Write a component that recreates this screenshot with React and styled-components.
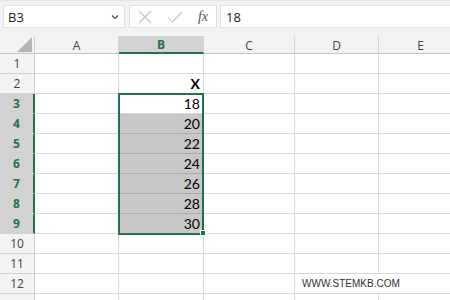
import React from "react";
import styled, { createGlobalStyle } from "styled-components";

const GlobalStyle = createGlobalStyle`
  html, body {
    margin: 0;
    padding: 0;
    background: #ffffff;
    overflow: hidden;
  }
`;

const GREEN = "#217346";
const COLS = ["A", "B", "C", "D", "E"];
const WIDTHS = [84, 85, 91, 84, 84];
const VALUES = { 2: "X", 3: 18, 4: 20, 5: 22, 6: 24, 7: 26, 8: 28, 9: 30 };

const Page = styled.div`
  width: 450px;
  height: 300px;
  overflow: hidden;
  position: relative;
  font-family: "Open Sans", "Noto Sans", sans-serif;
`;

const FormulaBar = styled.div`
  display: flex;
  align-items: flex-start;
  height: 36px;
  box-sizing: border-box;
  padding: 4px 0 0 3px;
  background: #f3f3f3;
  border-top: 1px solid #e3e3e3;
`;

const NameBox = styled.div`
  display: flex;
  align-items: center;
  justify-content: space-between;
  width: 122px;
  height: 23px;
  box-sizing: border-box;
  padding: 0 5px 0 4px;
  background: #fff;
  border: 1px solid #e2e2e2;
  font-size: 13px;
  color: #222;
`;

const ButtonBox = styled.div`
  display: flex;
  align-items: center;
  justify-content: space-between;
  width: 88px;
  height: 23px;
  margin-left: 4px;
  box-sizing: border-box;
  padding: 0 8px 0 8px;
  background: #fff;
  border: 1px solid #e2e2e2;
`;

const Fx = styled.span`
  font-family: "Liberation Serif", serif;
  font-style: italic;
  font-size: 14px;
  color: #555;
`;

const FormulaInput = styled.div`
  flex: 1;
  height: 23px;
  margin-left: 3px;
  box-sizing: border-box;
  padding: 0 5px;
  display: flex;
  align-items: center;
  background: #fff;
  border: 1px solid #e2e2e2;
  border-right: none;
  font-size: 13px;
  color: #222;
`;

const Sheet = styled.div`
  position: relative;
  display: grid;
  grid-template-columns: 35px ${WIDTHS.map((w) => w + "px").join(" ")};
  grid-auto-rows: 20px;
  grid-template-rows: 18px;
`;

const Corner = styled.div`
  background: #f3f3f3;
  border-right: 1px solid #cfcfcf;
  border-bottom: 1px solid #c4c4c4;
  box-sizing: border-box;
  display: flex;
  align-items: flex-end;
  justify-content: flex-end;
  padding: 0 2px 1px 0;
`;

const ColHead = styled.div`
  box-sizing: border-box;
  display: flex;
  align-items: center;
  justify-content: center;
  font-size: 12px;
  background: ${(p) => (p.$active ? "#d2d2d2" : "#f3f3f3")};
  color: ${(p) => (p.$active ? GREEN : "#444")};
  font-weight: ${(p) => (p.$active ? 700 : 400)};
  border-right: 1px solid #d4d4d4;
  border-bottom: ${(p) => (p.$active ? `2px solid ${GREEN}` : "1px solid #c4c4c4")};
  padding-top: 1px;
`;

const RowHead = styled.div`
  box-sizing: border-box;
  display: flex;
  align-items: center;
  justify-content: center;
  font-size: 12px;
  background: ${(p) => (p.$active ? "#d2d2d2" : "#f3f3f3")};
  color: ${(p) => (p.$active ? GREEN : "#444")};
  font-weight: ${(p) => (p.$active ? 700 : 400)};
  border-right: ${(p) => (p.$active ? `2px solid ${GREEN}` : "1px solid #cfcfcf")};
  border-bottom: 1px solid #d4d4d4;
`;

const Cell = styled.div`
  box-sizing: border-box;
  display: flex;
  align-items: flex-end;
  justify-content: flex-end;
  padding: 0 3px 1px 0;
  font-family: Lato, "Liberation Sans", sans-serif;
  font-size: 14px;
  font-weight: ${(p) => (p.$bold ? 700 : 400)};
  color: #000;
  background: ${(p) => (p.$shade ? "#c8c8c8" : "#fff")};
  border-right: 1px solid #d9d9d9;
  border-bottom: 1px solid ${(p) => (p.$shade ? "#acacac" : "#d9d9d9")};
  white-space: nowrap;
`;

const Watermark = styled.div`
  grid-column: span 2;
  box-sizing: border-box;
  display: flex;
  align-items: center;
  padding: 0 0 1px 7px;
  font-family: "Liberation Sans", Arial, sans-serif;
  font-size: 10px;
  color: #333;
  white-space: nowrap;
  border-bottom: 1px solid #d9d9d9;
`;

const Selection = styled.div`
  position: absolute;
  left: 118px;
  top: 57px;
  width: 86px;
  height: 142px;
  box-sizing: border-box;
  border: 2px solid ${GREEN};
  pointer-events: none;
`;

const Handle = styled.div`
  position: absolute;
  left: 200px;
  top: 194px;
  width: 6px;
  height: 6px;
  box-sizing: border-box;
  background: ${GREEN};
  border: 1px solid #fff;
`;

const Chevron = () => (
  <svg width="8" height="6" viewBox="0 0 8 6">
    <path d="M1 1.5 L4 4.5 L7 1.5" fill="none" stroke="#444" strokeWidth="1.1" />
  </svg>
);

const Cross = () => (
  <svg width="14" height="14" viewBox="0 0 14 14">
    <path d="M1 1 L13 13 M13 1 L1 13" stroke="#c4c4c4" strokeWidth="1.1" />
  </svg>
);

const Check = () => (
  <svg width="16" height="12" viewBox="0 0 16 12">
    <path d="M1 6 L5.5 11 L15 1" fill="none" stroke="#c4c4c4" strokeWidth="1.1" />
  </svg>
);

const Triangle = () => (
  <svg width="15" height="15" viewBox="0 0 15 15">
    <path d="M15 0 L15 15 L0 15 Z" fill="#b4b4b4" />
  </svg>
);

const App = () => {
  const rows = Array.from({ length: 13 }, (_, i) => i + 1);
  return (
    <Page>
      <GlobalStyle />
      <FormulaBar>
        <NameBox>
          <span>B3</span>
          <Chevron />
        </NameBox>
        <ButtonBox>
          <Cross />
          <Check />
          <Fx>fx</Fx>
        </ButtonBox>
        <FormulaInput>18</FormulaInput>
      </FormulaBar>
      <Sheet>
        <Corner>
          <Triangle />
        </Corner>
        {COLS.map((c) => (
          <ColHead key={c} $active={c === "B"}>
            {c}
          </ColHead>
        ))}
        {rows.map((r) => (
          <React.Fragment key={r}>
            <RowHead $active={r >= 3 && r <= 9}>{r <= 12 ? r : ""}</RowHead>
            {COLS.map((c) => {
              if (r === 12 && c === "E") return null;
              if (r === 12 && c === "D") {
                return <Watermark key={c}>WWW.STEMKB.COM</Watermark>;
              }
              const isB = c === "B";
              return (
                <Cell key={c} $shade={isB && r >= 4 && r <= 9} $bold={isB && r === 2}>
                  {isB ? VALUES[r] : ""}
                </Cell>
              );
            })}
          </React.Fragment>
        ))}
        <Selection />
        <Handle />
      </Sheet>
    </Page>
  );
};

export default App;
